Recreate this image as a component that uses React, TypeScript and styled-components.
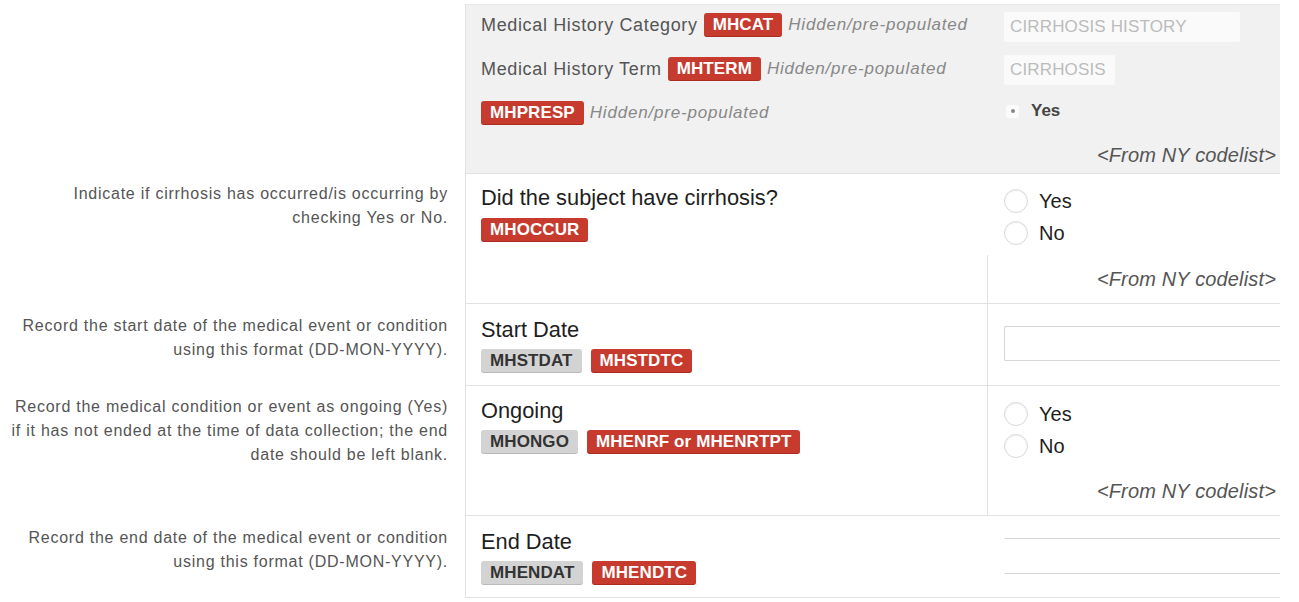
import React from "react";
import styled, { createGlobalStyle } from "styled-components";

const GlobalStyle = createGlobalStyle`
  html, body { margin: 0; padding: 0; background: #ffffff; }
  body { font-family: "Liberation Sans", Arial, Helvetica, sans-serif; color: #222; }
  * { box-sizing: border-box; }
`;

const Page = styled.div`
  width: 1299px;
  padding-top: 4px;
  display: flex;
  flex-direction: column;
`;

const Row = styled.div`
  display: grid;
  grid-template-columns: 465px 815px;
`;

const HelpText = styled.div<{ $top: number }>`
  padding: ${(p) => p.$top}px 17px 0 8px;
  text-align: right;
  font-size: 16px;
  line-height: 24px;
  letter-spacing: 0.75px;
  color: #555;
`;

const FormPart = styled.div<{ $muted?: boolean; $height: number }>`
  height: ${(p) => p.$height}px;
  display: grid;
  grid-template-columns: 521px 1fr;
  border-left: 1px solid #e2e2e2;
  border-bottom: 1px solid #e2e2e2;
  border-top: ${(p) => (p.$muted ? "1px solid #e8e8e8" : "none")};
  background: ${(p) => (p.$muted ? "#f1f1f1" : "#ffffff")};
`;

const LabelCell = styled.div<{ $top: number }>`
  padding: ${(p) => p.$top}px 15px 0 15px;
  display: flex;
  flex-direction: column;
  align-items: flex-start;
`;

const HiddenLines = styled.div`
  display: flex;
  flex-direction: column;
  gap: 6px;
  padding: 1px 15px 0;
`;

const HiddenLine = styled.div`
  height: 38px;
  display: flex;
  align-items: center;
  gap: 6px;
`;

const HiddenLabel = styled.span`
  font-size: 18px;
  letter-spacing: 0.65px;
  color: #555;
`;

const HiddenNote = styled.span`
  font-size: 17px;
  font-style: italic;
  letter-spacing: 0.8px;
  color: #888;
`;

const Question = styled.div`
  font-size: 21.8px;
  line-height: 26px;
  color: #1e1e1e;
`;

const BadgeRow = styled.div<{ $top: number }>`
  display: flex;
  gap: 9px;
  margin-top: ${(p) => p.$top}px;
`;

const Badge = styled.span<{ $variant: "red" | "gray" }>`
  display: inline-flex;
  align-items: center;
  height: 24px;
  padding: 0 9px;
  border-radius: 3px;
  font-size: 17px;
  font-weight: 700;
  letter-spacing: 0.1px;
  white-space: nowrap;
  color: ${(p) => (p.$variant === "red" ? "#ffffff" : "#333333")};
  background: ${(p) => (p.$variant === "red" ? "#c73a2e" : "#d3d3d3")};
  box-shadow: ${(p) =>
    p.$variant === "red"
      ? "inset 0 -1px 0 rgba(120,20,10,0.35)"
      : "inset 0 -1px 0 rgba(0,0,0,0.12)"};
`;

const ValueColumn = styled.div<{ $divider?: boolean }>`
  display: flex;
  flex-direction: column;
  border-left: 1px solid ${(p) => (p.$divider ? "#e2e2e2" : "transparent")};
  min-height: 0;
`;

const Options = styled.div<{ $top: number; $gap?: number }>`
  padding: ${(p) => p.$top}px 0 0 16px;
  display: flex;
  flex-direction: column;
  gap: ${(p) => p.$gap ?? 0}px;
`;

const PrefilledBox = styled.div<{ $width: number }>`
  width: ${(p) => p.$width}px;
  height: 30px;
  display: flex;
  align-items: center;
  padding-left: 6px;
  background: #fafafa;
  border-radius: 2px;
  font-size: 17px;
  letter-spacing: 0.15px;
  color: #bcbcbc;
`;

const MiniRadioRow = styled.div`
  height: 26px;
  display: flex;
  align-items: center;
  gap: 12px;
  padding-left: 2px;
`;

const MiniRadio = styled.span`
  width: 13px;
  height: 13px;
  border-radius: 3px;
  background: #fbfbfb;
  display: flex;
  align-items: center;
  justify-content: center;
  &::after {
    content: "";
    width: 4px;
    height: 4px;
    border-radius: 50%;
    background: #888;
  }
`;

const MiniLabel = styled.span`
  font-size: 17px;
  font-weight: 700;
  color: #444;
`;

const RadioRow = styled.label`
  height: 32px;
  display: flex;
  align-items: center;
  gap: 11px;
`;

const RadioCircle = styled.span`
  width: 24px;
  height: 24px;
  border-radius: 50%;
  background: #ffffff;
  border: 1px solid #d9d9d9;
  box-shadow: inset 0 1px 2px rgba(0, 0, 0, 0.07);
`;

const RadioText = styled.span`
  font-size: 20px;
  color: #1e1e1e;
`;

const Codelist = styled.div<{ $divider?: boolean; $height: number }>`
  margin-top: auto;
  height: ${(p) => p.$height}px;
  display: flex;
  align-items: center;
  justify-content: flex-end;
  padding-right: 4px;
  border-left: 1px solid ${(p) => (p.$divider ? "#e2e2e2" : "transparent")};
  margin-left: ${(p) => (p.$divider ? "-1px" : "0")};
  font-size: 20px;
  letter-spacing: 0.15px;
  font-style: italic;
  color: #555;
`;

const DateField = styled.div<{ $open?: boolean }>`
  width: 276px;
  height: ${(p) => (p.$open ? 36 : 35)}px;
  background: #ffffff;
  border-top: 1px solid #d6d6d6;
  border-bottom: 1px solid #d6d6d6;
  border-left: 1px solid ${(p) => (p.$open ? "transparent" : "#d6d6d6")};
  border-radius: ${(p) => (p.$open ? "0" : "2px 0 0 2px")};
`;

const Radio = ({ label }: { label: string }) => (
  <RadioRow>
    <RadioCircle />
    <RadioText>{label}</RadioText>
  </RadioRow>
);

export default function App() {
  return (
    <>
      <GlobalStyle />
      <Page>
        <Row>
          <HelpText $top={0} />
          <FormPart $muted $height={170}>
            <HiddenLines>
              <HiddenLine>
                <HiddenLabel>Medical History Category</HiddenLabel>
                <Badge $variant="red">MHCAT</Badge>
                <HiddenNote>Hidden/pre-populated</HiddenNote>
              </HiddenLine>
              <HiddenLine>
                <HiddenLabel>Medical History Term</HiddenLabel>
                <Badge $variant="red">MHTERM</Badge>
                <HiddenNote>Hidden/pre-populated</HiddenNote>
              </HiddenLine>
              <HiddenLine>
                <Badge $variant="red">MHPRESP</Badge>
                <HiddenNote>Hidden/pre-populated</HiddenNote>
              </HiddenLine>
            </HiddenLines>
            <ValueColumn>
              <Options $top={7} $gap={13}>
                <PrefilledBox $width={236}>CIRRHOSIS HISTORY</PrefilledBox>
                <PrefilledBox $width={111}>CIRRHOSIS</PrefilledBox>
                <MiniRadioRow>
                  <MiniRadio />
                  <MiniLabel>Yes</MiniLabel>
                </MiniRadioRow>
              </Options>
              <Codelist $height={36}>&lt;From NY codelist&gt;</Codelist>
            </ValueColumn>
          </FormPart>
        </Row>

        <Row>
          <HelpText $top={8}>
            Indicate if cirrhosis has occurred/is occurring by
            <br />
            checking Yes or No.
          </HelpText>
          <FormPart $height={130}>
            <LabelCell $top={11}>
              <Question>Did the subject have cirrhosis?</Question>
              <BadgeRow $top={7}>
                <Badge $variant="red">MHOCCUR</Badge>
              </BadgeRow>
            </LabelCell>
            <ValueColumn>
              <Options $top={11}>
                <Radio label="Yes" />
                <Radio label="No" />
              </Options>
              <Codelist $divider $height={48}>
                &lt;From NY codelist&gt;
              </Codelist>
            </ValueColumn>
          </FormPart>
        </Row>

        <Row>
          <HelpText $top={10}>
            Record the start date of the medical event or condition
            <br />
            using this format (DD-MON-YYYY).
          </HelpText>
          <FormPart $height={82}>
            <LabelCell $top={13}>
              <Question>Start Date</Question>
              <BadgeRow $top={6}>
                <Badge $variant="gray">MHSTDAT</Badge>
                <Badge $variant="red">MHSTDTC</Badge>
              </BadgeRow>
            </LabelCell>
            <ValueColumn $divider>
              <Options $top={22}>
                <DateField />
              </Options>
            </ValueColumn>
          </FormPart>
        </Row>

        <Row>
          <HelpText $top={9}>
            Record the medical condition or event as ongoing (Yes)
            <br />
            if it has not ended at the time of data collection; the end
            <br />
            date should be left blank.
          </HelpText>
          <FormPart $height={130}>
            <LabelCell $top={12}>
              <Question>Ongoing</Question>
              <BadgeRow $top={6}>
                <Badge $variant="gray">MHONGO</Badge>
                <Badge $variant="red">MHENRF or MHENRTPT</Badge>
              </BadgeRow>
            </LabelCell>
            <ValueColumn $divider>
              <Options $top={12}>
                <Radio label="Yes" />
                <Radio label="No" />
              </Options>
              <Codelist $height={48}>&lt;From NY codelist&gt;</Codelist>
            </ValueColumn>
          </FormPart>
        </Row>

        <Row>
          <HelpText $top={10}>
            Record the end date of the medical event or condition
            <br />
            using this format (DD-MON-YYYY).
          </HelpText>
          <FormPart $height={82}>
            <LabelCell $top={13}>
              <Question>End Date</Question>
              <BadgeRow $top={6}>
                <Badge $variant="gray">MHENDAT</Badge>
                <Badge $variant="red">MHENDTC</Badge>
              </BadgeRow>
            </LabelCell>
            <ValueColumn>
              <Options $top={22}>
                <DateField $open />
              </Options>
            </ValueColumn>
          </FormPart>
        </Row>
      </Page>
    </>
  );
}
